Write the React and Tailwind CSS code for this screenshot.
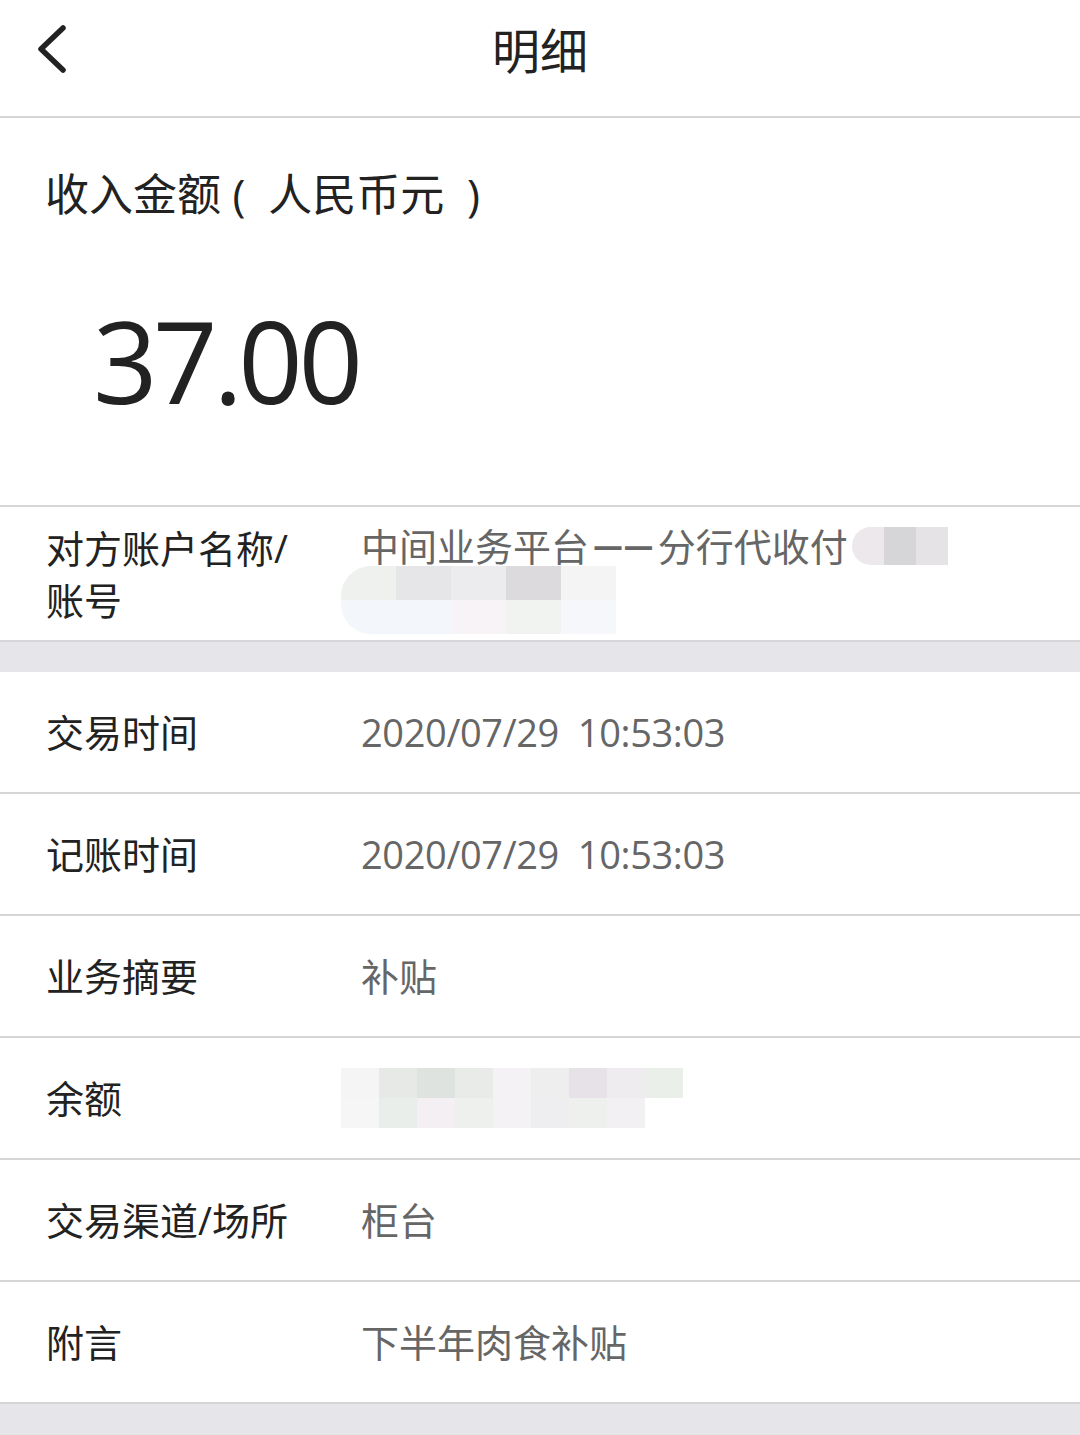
const cjk = "font-['Open_Sans','Noto_Sans_CJK_SC',sans-serif]";

// Pale pixel mosaic used to hide private numbers
const Mosaic = ({ cells, size, className = "" }) => (
  <div className={`flex flex-col ${className}`}>
    {cells.map((row, i) => (
      <div key={i} className="flex">
        {row.map((c, j) => (
          <div key={j} className={`${size} ${c}`} />
        ))}
      </div>
    ))}
  </div>
);

const Row = ({ label, children }) => (
  <div className="flex h-[122px] items-center border-b-2 border-[#d6d6d9] bg-white">
    <div className="w-[361px] shrink-0 pl-[46px] text-[38px] leading-[52px] text-[#222]">{label}</div>
    <div className="whitespace-pre text-[38px] leading-[52px] text-[#666]">{children}</div>
  </div>
);

export default function App() {
  return (
    <div className={`min-h-[1435px] w-[1080px] bg-[#e6e6ea] ${cjk}`}>
      {/* top bar */}
      <div className="relative flex h-[118px] items-center justify-center border-b-2 border-[#d6d6d9] bg-white pb-[14px]">
        <svg className="absolute left-[35px] top-[25px] h-[48px] w-[32px]" viewBox="0 0 32 48" fill="none">
          <path d="M28 3 L6 24 L28 45" stroke="#222" strokeWidth="5.5" strokeLinecap="round" strokeLinejoin="round" />
        </svg>
        <div className="text-[48px] leading-none text-[#222]">明细</div>
      </div>

      {/* amount */}
      <div className="h-[389px] border-b-2 border-[#d6d6d9] bg-white pl-[45px] pt-[46px]">
        <div className="whitespace-pre text-[44px] leading-[60px] text-[#222]">收入金额 (  人民币元  )</div>
        <div className="mt-[76px] pl-[48px] text-[113px] leading-[120px] tracking-[-0.04em] text-[#222]">37.00</div>
      </div>

      {/* counterparty */}
      <div className="flex h-[135px] items-center border-b-2 border-[#d6d6d9] bg-white">
        <div className="w-[361px] shrink-0 pl-[46px] text-[38px] leading-[52px] text-[#222]">
          对方账户名称/
          <br />
          账号
        </div>
        <div className="flex flex-col pt-[6px]">
          <div className="flex items-center text-[38px] leading-[52px] text-[#666]">
            <span>中间业务平台</span>
            <span className="font-['Noto_Sans_CJK_SC',sans-serif] font-bold tracking-[-0.2em]">－－</span>
            <span className="ml-[8px]">分行代收付</span>
            <Mosaic
              className="ml-[4px] overflow-hidden rounded-l-full"
              size="h-[38px] w-[32px]"
              cells={[["bg-[#ece8ec]", "bg-[#d6d5d8]", "bg-[#e6e3e7]"]]}
            />
          </div>
          <Mosaic
            className="-ml-[20px] mt-[-6px] overflow-hidden rounded-l-[30px]"
            size="h-[34px] w-[55px]"
            cells={[
              ["bg-[#eef1ee]", "bg-[#e6e6e8]", "bg-[#ececee]", "bg-[#dcdadd]", "bg-[#f4f4f5]"],
              ["bg-[#f3f6fb]", "bg-[#f3f6fb]", "bg-[#f7f3f6]", "bg-[#f0f3f0]", "bg-[#f5f7fa]"],
            ]}
          />
        </div>
      </div>

      <div className="h-[30px]" />

      <div>
        <Row label="交易时间">
          <span className="text-[38px] tracking-[-0.01em]">2020/07/29  10:53:03</span>
        </Row>
        <Row label="记账时间">
          <span className="text-[38px] tracking-[-0.01em]">2020/07/29  10:53:03</span>
        </Row>
        <Row label="业务摘要">补贴</Row>
        <Row label="余额">
          <Mosaic
            className="-ml-[20px]"
            size="h-[30px] w-[38px]"
            cells={[
              ["bg-[#f5f5f5]", "bg-[#e6e9e6]", "bg-[#dfe3df]", "bg-[#e8ebe8]", "bg-[#f4f2f4]", "bg-[#eeeeef]", "bg-[#e6e2e7]", "bg-[#eeecee]", "bg-[#eaefea]"],
              ["bg-[#f6f6f6]", "bg-[#eaeeea]", "bg-[#f3eff3]", "bg-[#edf0ed]", "bg-[#f5f2f5]", "bg-[#eeedef]", "bg-[#eef0ee]", "bg-[#f3f0f3]", "bg-white"],
            ]}
          />
        </Row>
        <Row label="交易渠道/场所">柜台</Row>
        <Row label="附言">下半年肉食补贴</Row>
      </div>
    </div>
  );
}
